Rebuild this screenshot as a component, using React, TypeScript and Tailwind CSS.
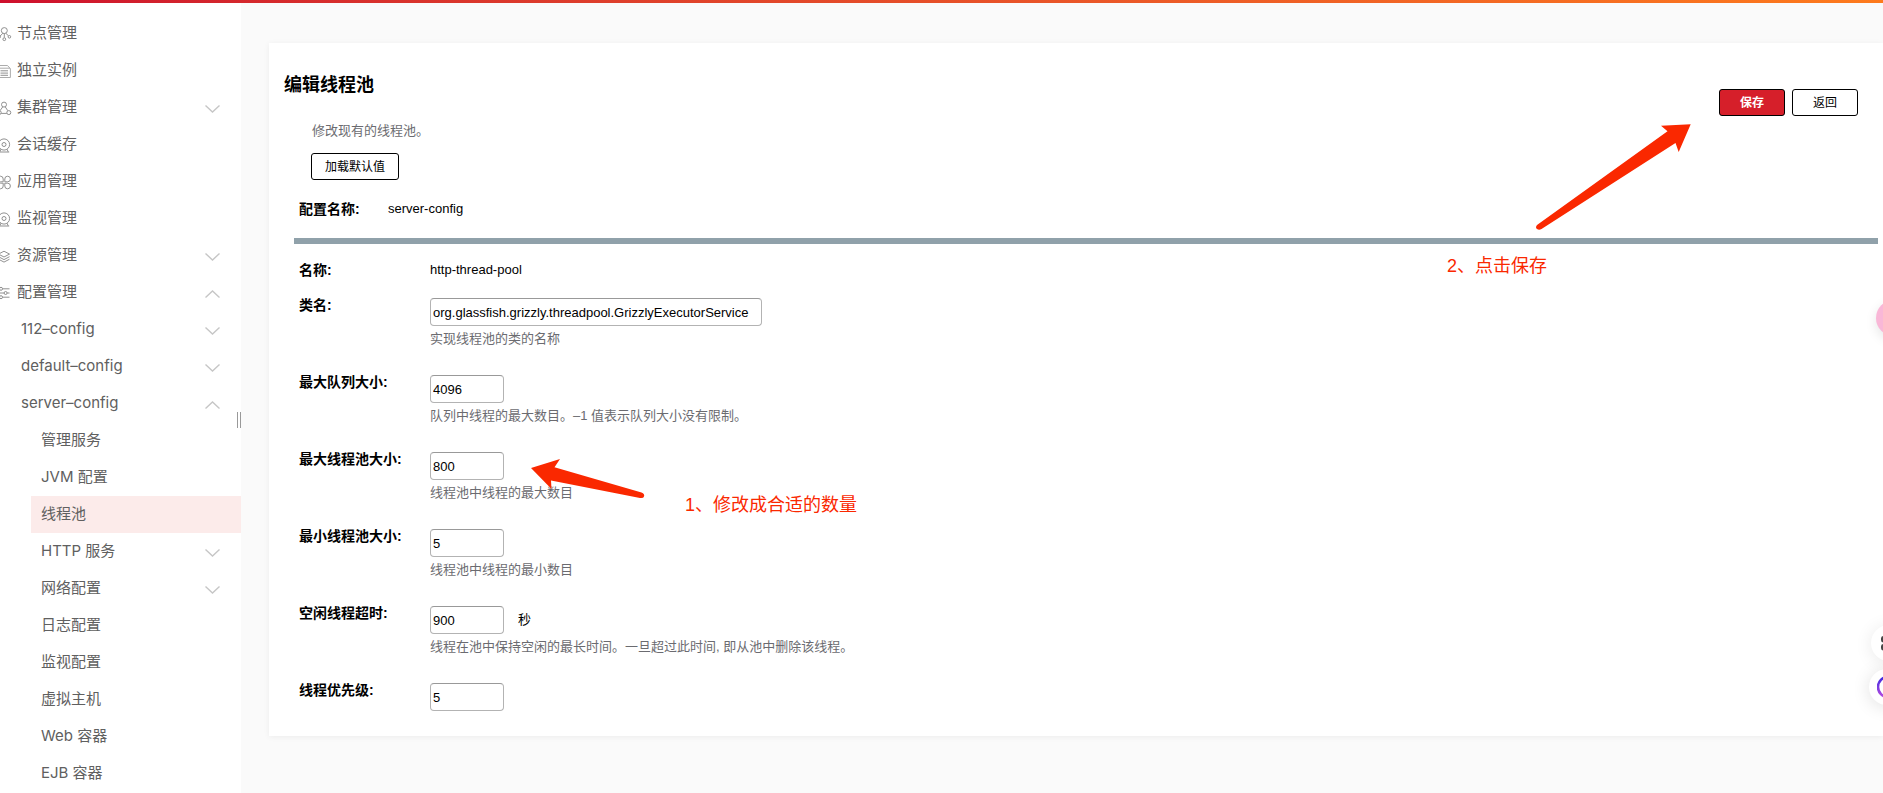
import { ReactNode } from 'react';
import clsx from 'clsx';

interface MenuItem {
  label: string;
  level: 0 | 1 | 2;
  icon?: ReactNode;
  state?: 'open' | 'closed';
  active?: boolean;
}

interface FormField {
  id: string;
  label: string;
  value: string;
  hint?: string;
  unit?: string;
  wide?: boolean;
}

function MenuIcon({ children }: { children: ReactNode }) {
  return (
    <svg viewBox="0 0 16 16" className="size-4 mt-0.5 shrink-0" fill="none" stroke="#858585" strokeWidth="0.9" aria-hidden="true">
      {children}
    </svg>
  );
}

const nodeIcon = (
  <MenuIcon>
    <circle cx="8.3" cy="4.6" r="3" />
    <path d="M8.3 7.6v4M6.9 7.2L4 10.2M9.7 7.2l2.8 2.6" />
    <circle cx="8.3" cy="13.2" r="1.4" />
    <circle cx="13.4" cy="10.8" r="1.3" />
    <circle cx="3.2" cy="10.8" r="1.3" />
  </MenuIcon>
);

const instanceIcon = (
  <MenuIcon>
    <path d="M2 14.5V2.5h9.5l2.9 3.200v8.800zM2 5.200h12" stroke="#a3a3a3" />
    <path d="M4.500 7.800h7.500M4.500 10.100h7.500M4.500 12.300h7.500" />
  </MenuIcon>
);

const clusterIcon = (
  <MenuIcon>
    <circle cx="8" cy="4.6" r="2.5" />
    <circle cx="12.8" cy="12.6" r="2" />
    <circle cx="3.2" cy="12.6" r="2" />
    <path d="M6.8 6.8L4 10.7M9.2 6.8l2.6 3.9M5.2 13.4h5.6" />
  </MenuIcon>
);

const cameraIcon = (
  <MenuIcon>
    <circle cx="8" cy="7.5" r="5.6" />
    <circle cx="8" cy="7.5" r="2" />
    <path d="M5 12.2l-1.2 2.6M11 12.2l1.2 2.6M2.8 15h10.4" />
  </MenuIcon>
);

const appIcon = (
  <MenuIcon>
    <path d="M7.2 7.8V5A2.8 2.8 0 1 0 4.4 7.8zM8.8 7.8V5a2.8 2.8 0 1 1 2.8 2.8zM7.2 9.2V12a2.8 2.8 0 1 1-2.8-2.8zM8.8 9.2V12a2.8 2.8 0 1 0 2.8-2.8z" />
  </MenuIcon>
);

const layersIcon = (
  <MenuIcon>
    <path d="M8 3.2l5.5 2.9L8 9 2.5 6.1zM2.5 8.7L8 11.6l5.5-2.9M2.5 11.2L8 14.1l5.5-2.9" />
  </MenuIcon>
);

const slidersIcon = (
  <MenuIcon>
    <circle cx="5" cy="3.8" r="1.5" />
    <circle cx="9.6" cy="8" r="1.5" />
    <circle cx="5" cy="12.2" r="1.5" />
    <path d="M1 3.8h2.5M6.5 3.8h7M1 8h7.1M11.1 8h2.4M1 12.2h2.5M6.5 12.2h7" />
  </MenuIcon>
);

const menu: MenuItem[] = [
  { label: '节点管理', level: 0, icon: nodeIcon },
  { label: '独立实例', level: 0, icon: instanceIcon },
  { label: '集群管理', level: 0, icon: clusterIcon, state: 'closed' },
  { label: '会话缓存', level: 0, icon: cameraIcon },
  { label: '应用管理', level: 0, icon: appIcon },
  { label: '监视管理', level: 0, icon: cameraIcon },
  { label: '资源管理', level: 0, icon: layersIcon, state: 'closed' },
  { label: '配置管理', level: 0, icon: slidersIcon, state: 'open' },
  { label: '112–config', level: 1, state: 'closed' },
  { label: 'default–config', level: 1, state: 'closed' },
  { label: 'server–config', level: 1, state: 'open' },
  { label: '管理服务', level: 2 },
  { label: 'JVM 配置', level: 2 },
  { label: '线程池', level: 2, active: true },
  { label: 'HTTP 服务', level: 2, state: 'closed' },
  { label: '网络配置', level: 2, state: 'closed' },
  { label: '日志配置', level: 2 },
  { label: '监视配置', level: 2 },
  { label: '虚拟主机', level: 2 },
  { label: 'Web 容器', level: 2 },
  { label: 'EJB 容器', level: 2 },
];

const fields: FormField[] = [
  {
    id: 'className',
    label: '类名:',
    value: 'org.glassfish.grizzly.threadpool.GrizzlyExecutorService',
    hint: '实现线程池的类的名称',
    wide: true,
  },
  { id: 'maxQueue', label: '最大队列大小:', value: '4096', hint: '队列中线程的最大数目。–1 值表示队列大小没有限制。' },
  { id: 'maxPool', label: '最大线程池大小:', value: '800', hint: '线程池中线程的最大数目' },
  { id: 'minPool', label: '最小线程池大小:', value: '5', hint: '线程池中线程的最小数目' },
  {
    id: 'idleTimeout',
    label: '空闲线程超时:',
    value: '900',
    unit: '秒',
    hint: '线程在池中保持空闲的最长时间。一旦超过此时间, 即从池中删除该线程。',
  },
  { id: 'priority', label: '线程优先级:', value: '5' },
];

function Chevron({ open }: { open: boolean }) {
  return (
    <svg viewBox="0 0 15 8" className="w-[15px] h-2 mt-1 shrink-0" fill="none" stroke="#c6c6c6" strokeWidth="1.4" aria-hidden="true">
      <path d={open ? 'M0.5 7.5L7.5 1l7 6.5' : 'M0.5 0.5L7.5 7l7-6.5'} />
    </svg>
  );
}

function MenuRow({ item }: { item: MenuItem }) {
  const cls = clsx(
    'flex items-center h-[37px] pr-[21px] pb-0.5 text-left cursor-pointer',
    item.level === 0 && '-ml-1 gap-[5px]',
    item.level === 1 && 'pl-[21px]',
    item.level === 2 && 'ml-[31px] pl-[10px]',
    item.active && 'bg-[#fcebea]',
  );
  const label = <span className="flex-1 whitespace-nowrap">{item.label}</span>;

  if (item.state) {
    return (
      <button type="button" className={cls} aria-expanded={item.state === 'open'}>
        {item.icon}
        {label}
        <Chevron open={item.state === 'open'} />
      </button>
    );
  }
  return (
    <a href="#" className={cls}>
      {item.icon}
      {label}
    </a>
  );
}

function Sidebar() {
  return (
    <nav className="relative w-[241px] shrink-0 overflow-hidden bg-white pt-3 flex flex-col text-[15px] leading-5 text-[#606060] font-[Inter,'Noto_Sans_CJK_SC',sans-serif]">
      {menu.map((item) => (
        <MenuRow key={item.label} item={item} />
      ))}
      {/* Drag handle */}
      <div className="absolute right-0 top-[409px] w-1 h-4 border-x border-[#999]" />
    </nav>
  );
}

function FieldRow({ field }: { field: FormField }) {
  return (
    <div className="flex items-start">
      <label htmlFor={field.id} className="w-[131px] shrink-0 text-sm leading-5 font-bold">
        {field.label}
      </label>
      <div className="pt-[3px]">
        <div className="flex items-center gap-[14px]">
          <input
            id={field.id}
            defaultValue={field.value}
            className={clsx(
              'h-7 px-0.5 text-[13px] bg-white border border-[#b3b3b3] border-t-[#999] rounded-[4px]',
              field.wide ? 'w-[332px]' : 'w-[74px]',
            )}
          />
          {field.unit && <span className="text-[13px] leading-5">{field.unit}</span>}
        </div>
        {field.hint && <p className="mt-[3px] text-[13px] leading-5 text-[#6b6b70]">{field.hint}</p>}
      </div>
    </div>
  );
}

const buttonBase = 'h-[27px] border border-black rounded-[3px] text-xs cursor-pointer';

function Annotations() {
  return (
    <>
      <svg className="absolute left-[530px] top-[456px]" width="116" height="44" viewBox="530 456 116 44" aria-hidden="true">
        <path
          d="M531 468L560 459L554.5 467.3L641.5 492.5Q645 494 644 496.5Q643.5 498.5 640 498L551 480.5L551.5 489Z"
          fill="#fa2800"
        />
      </svg>
      <p className="absolute left-[685px] top-[493px] text-lg leading-6 text-[#fa2800]">1、修改成合适的数量</p>
      <svg className="absolute right-[191px] top-[122px]" width="158" height="110" viewBox="1534 122 158 110" aria-hidden="true">
        <path
          d="M1690.7 124.3L1661 125.7L1667.5 131.3L1537 225Q1535 227.5 1537 229Q1539 230.5 1541.5 229L1675.5 143L1678.7 152Z"
          fill="#fa2800"
        />
      </svg>
      <p className="absolute right-[336px] top-[254px] text-lg leading-6 text-[#fa2800]">2、点击保存</p>
    </>
  );
}

function FloatingTools() {
  return (
    <>
      <button
        type="button"
        aria-label="助手"
        className="absolute -right-[29px] top-[300px] size-9 rounded-full bg-[#f9b7d7] shadow-[0_4px_12px_rgba(0,0,0,0.1)]"
      />
      <button
        type="button"
        aria-label="应用"
        className="absolute -right-[24px] top-[625px] size-9 rounded-full bg-white shadow-[0_2px_18px_rgba(0,0,0,0.09)] flex items-center justify-center"
      >
        <svg width="16" height="16" viewBox="0 0 16 16" fill="none" stroke="#444" strokeWidth="2" aria-hidden="true">
          <rect x="1" y="2" width="4.5" height="4.5" rx="1.5" />
          <rect x="1" y="10" width="4.5" height="4.5" rx="1.5" />
          <rect x="9" y="2" width="4.5" height="4.5" rx="1.5" />
          <rect x="9" y="10" width="4.5" height="4.5" rx="1.5" />
        </svg>
      </button>
      <button
        type="button"
        aria-label="聊天"
        className="absolute -right-[22px] top-[669px] size-9 rounded-full bg-white shadow-[0_2px_18px_rgba(0,0,0,0.12)] flex items-center justify-center"
      >
        <svg width="20" height="24" viewBox="0 0 20 24" fill="none" aria-hidden="true">
          <defs>
            <linearGradient id="ring" x1="0" y1="0" x2="0" y2="1">
              <stop offset="0" stopColor="#3f2be0" />
              <stop offset="1" stopColor="#b44be0" />
            </linearGradient>
          </defs>
          <circle cx="11" cy="12" r="10" stroke="url(#ring)" strokeWidth="2.6" />
        </svg>
      </button>
    </>
  );
}

export default function App() {
  return (
    <div className="relative min-h-screen overflow-hidden flex flex-col bg-[#fafafa] text-black font-['Liberation_Sans','Noto_Sans_CJK_SC',sans-serif]">
      <div className="h-[3px] bg-linear-to-r from-[#ce0f2d] to-[#fd7a1c]" />
      <div className="flex-1 flex">
        <Sidebar />

        <main className="flex-1 min-w-0 pt-10 pl-7">
          <form className="bg-white pt-[30px] pb-[25px] pr-[5px] shadow-[0_1px_6px_rgba(0,0,0,0.06)]">
            <header className="flex items-start justify-between pl-[15px] pr-5">
              <div>
                <h1 className="text-lg leading-6 font-bold">编辑线程池</h1>
                <p className="mt-6 ml-7 text-[13px] leading-5 text-[#6b6b70]">修改现有的线程池。</p>
                <button type="button" className={clsx(buttonBase, 'mt-3 ml-[27px] w-[88px] block bg-white')}>
                  加载默认值
                </button>
              </div>
              <div className="mt-4 flex gap-[7px]">
                <button type="button" className={clsx(buttonBase, 'w-[66px] bg-[#d61f2a] font-bold text-white')}>
                  保存
                </button>
                <button type="button" className={clsx(buttonBase, 'w-[66px] bg-white')}>
                  返回
                </button>
              </div>
            </header>

            <div className="mt-[19px] ml-[30px] flex items-center leading-5">
              <span className="w-[89px] text-sm leading-5 font-bold">配置名称:</span>
              <span className="text-[13px] leading-5">server-config</span>
            </div>

            <hr className="mt-[19px] ml-[25px] h-1.5 border-0 bg-[#90a1aa]" />

            <div className="mt-4 ml-[30px] flex items-center">
              <span className="w-[131px] text-sm leading-5 font-bold">名称:</span>
              <span className="text-[13px] leading-5">http-thread-pool</span>
            </div>

            <div className="mt-[15px] ml-[30px] flex flex-col gap-[23px]">
              {fields.map((f) => (
                <FieldRow key={f.id} field={f} />
              ))}
            </div>
          </form>
        </main>
      </div>

      <Annotations />
      <FloatingTools />
    </div>
  );
}
